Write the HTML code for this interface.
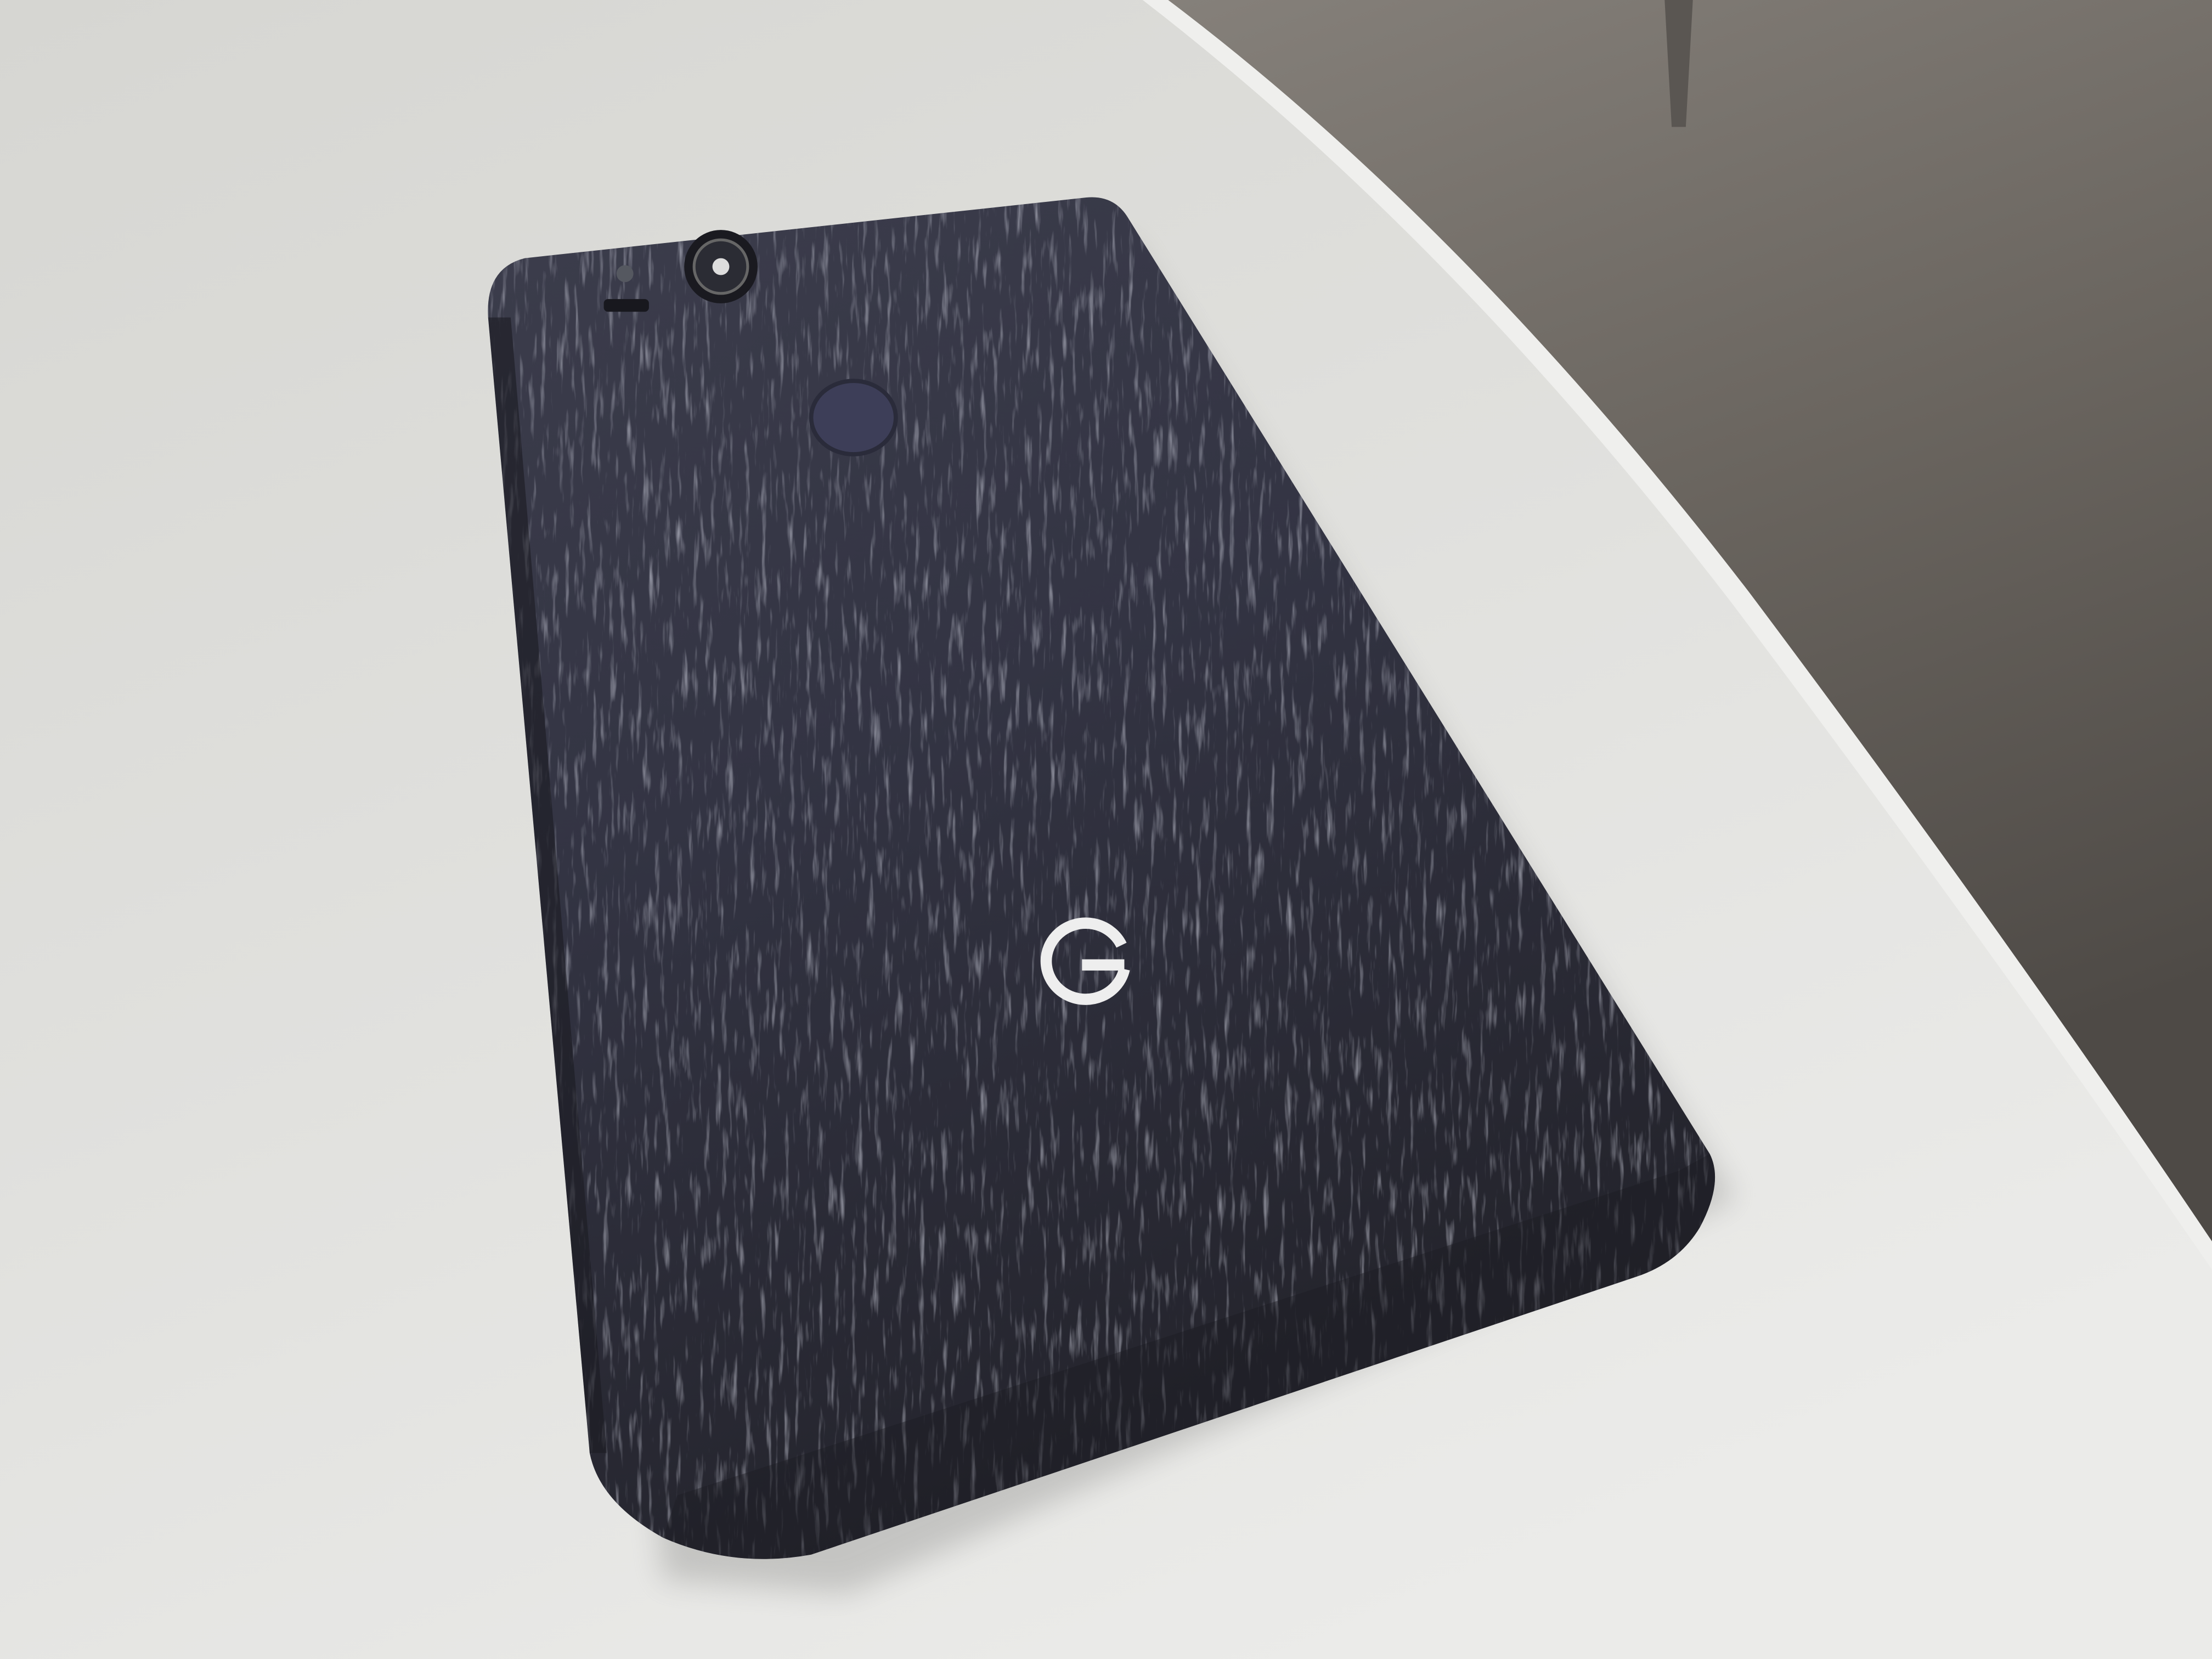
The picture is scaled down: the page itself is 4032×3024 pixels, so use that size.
<!DOCTYPE html>
<html><head><meta charset="utf-8"><style>html,body{margin:0;padding:0;width:4032px;height:3024px;overflow:hidden;background:#e0e0dd}svg{display:block}</style></head>
<body>
<svg width="4032" height="3024" viewBox="0 0 1568 1176" preserveAspectRatio="none" xmlns="http://www.w3.org/2000/svg">
<defs>
<linearGradient id="tbl" x1="0" y1="0" x2="0.6" y2="1">
<stop offset="0" stop-color="#d6d6d2"/><stop offset="0.5" stop-color="#e0e0dd"/><stop offset="1" stop-color="#ebebe9"/>
</linearGradient>
<linearGradient id="flr" x1="0" y1="0" x2="0.3" y2="1">
<stop offset="0" stop-color="#85807a"/><stop offset="0.5" stop-color="#6a655f"/><stop offset="1" stop-color="#4e4a46"/>
</linearGradient>
<linearGradient id="ph" x1="0" y1="0" x2="0.4" y2="1">
<stop offset="0" stop-color="#3c3d4c"/><stop offset="0.45" stop-color="#333443"/><stop offset="1" stop-color="#23232b"/>
</linearGradient>
<filter id="tex" x="0" y="0" width="100%" height="100%">
<feTurbulence type="fractalNoise" baseFrequency="0.25 0.03" numOctaves="3" seed="4" result="n"/>
<feColorMatrix in="n" type="matrix" values="0 0 0 0 0.62  0 0 0 0 0.63  0 0 0 0 0.72  0 0 0 2.6 -1.45" result="c"/>
<feComposite in="c" in2="SourceGraphic" operator="in"/>
</filter>
<filter id="blur"><feGaussianBlur stdDeviation="10"/></filter>
<clipPath id="pc"><path d="M372 183 L770 140 Q790 138 800 155 L1212 818 Q1222 838 1205 870 Q1190 895 1160 905 L575 1102 Q520 1112 470 1090 Q425 1065 418 1030 L346 225 Q344 190 372 183 Z"/></clipPath>
</defs>
<rect width="1568" height="1176" fill="url(#tbl)"/>
<path d="M828 0 L1568 0 L1568 880 Q1420 660 1240 420 Q1040 160 828 0 Z" fill="url(#flr)"/>
<path d="M1180 0 L1200 0 L1195 90 L1185 90 Z" fill="#5a5652"/>
<path d="M828 0 Q1040 160 1240 420 Q1420 660 1568 880 L1568 900 Q1410 670 1228 428 Q1028 168 810 0 Z" fill="#efefed"/>
<path d="M380 230 L800 170 L1230 850 L600 1130 L470 1120 Z" fill="#9a9a98" opacity="0.45" filter="url(#blur)"/>
<path d="M372 183 L770 140 Q790 138 800 155 L1212 818 Q1222 838 1205 870 Q1190 895 1160 905 L575 1102 Q520 1112 470 1090 Q425 1065 418 1030 L346 225 Q344 190 372 183 Z" fill="url(#ph)"/>
<g clip-path="url(#pc)">
<rect x="330" y="130" width="900" height="990" fill="#fff" filter="url(#tex)" opacity="0.6"/>
<path d="M1212 818 Q1222 838 1205 870 Q1190 895 1160 905 L575 1102 Q520 1112 470 1090 L480 1060 L1190 830 Z" fill="#1c1d24" opacity="0.45"/>
<path d="M346 225 L418 1030 L430 1030 L362 225 Z" fill="#1a1b22" opacity="0.6"/>
</g>
<circle cx="511" cy="189" r="26" fill="#1a1a20"/>
<circle cx="511" cy="189" r="19" fill="#2b2c34" stroke="#666" stroke-width="2"/>
<circle cx="511" cy="189" r="6" fill="#ddd"/>
<rect x="428" y="212" width="32" height="9" rx="3" fill="#18181e"/>
<circle cx="443" cy="194" r="6" fill="#555860"/>
<ellipse cx="605" cy="296" rx="30" ry="26" fill="#3d3e58" stroke="#2a2b3a" stroke-width="3"/>
<path d="M797 687 A28 27 0 1 1 795 670 M767 684 L797 684" fill="none" stroke="#eeeeee" stroke-width="8"/>
</svg>
</body></html>
